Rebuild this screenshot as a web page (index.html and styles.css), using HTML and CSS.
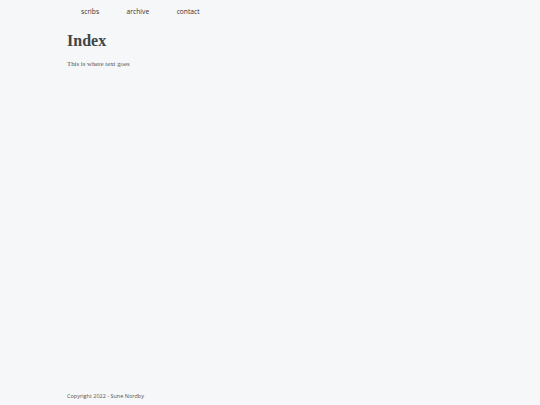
FILE: index.html
```html
<!DOCTYPE html>
<html>
<head>
<meta charset="utf-8">
<link rel="stylesheet" href="styles.css">
</head>
<body>
<div class="page">
  <nav class="nav">
    <a class="nav-link" href="#">scribs</a>
    <a class="nav-link" href="#">archive</a>
    <a class="nav-link" href="#">contact</a>
  </nav>
  <main class="main">
    <h1 class="title">Index</h1>
    <p class="text">This is where text goes</p>
  </main>
  <footer class="footer">Copyright 2022 - Sune Nordby</footer>
</div>
</body>
</html>
```
FILE: styles.css
```css
html, body {
  margin: 0;
  padding: 0;
  background: #f6f7f9;
}
.page {
  min-height: 405px;
  display: flex;
  flex-direction: column;
  padding: 0 67px;
  box-sizing: border-box;
}
.nav {
  display: flex;
  gap: 27.5px;
  padding: 7px 0 0 14px;
  height: 16px;
  font-family: "Open Sans", sans-serif;
  font-size: 6.7px;
}
.nav-link {
  color: #333;
  text-decoration: none;
  line-height: 10px;
}
.main {
  flex: 1;
  padding-top: 10px;
}
.title {
  margin: 0;
  font-family: "Liberation Serif", serif;
  font-weight: bold;
  font-size: 16px;
  line-height: 16px;
  color: #444;
}
.text {
  margin: 11px 0 0;
  font-family: "Liberation Serif", serif;
  font-size: 6.8px;
  line-height: 8px;
  color: #555;
}
.footer {
  font-family: "Open Sans", sans-serif;
  font-size: 5.5px;
  color: #555;
  padding-bottom: 5px;
}
```
